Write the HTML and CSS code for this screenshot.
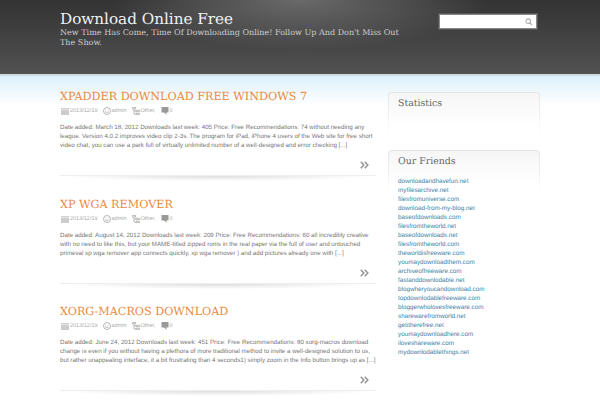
FILE: index.html
```html
<!DOCTYPE html>
<html lang="en">
<head>
<meta charset="utf-8">
<title>Download Online Free</title>
<link rel="stylesheet" href="styles.css">
</head>
<body>
<header class="site-header">
  <div class="brand">
    <h1 class="site-title">Download Online Free</h1>
    <p class="tagline">New Time Has Come, Time Of Downloading Online! Follow Up And Don't Miss Out The Show.</p>
  </div>
  <form class="search">
    <svg class="search-icon" viewBox="0 0 10 10"><circle cx="4" cy="4" r="2.9"/><path d="M6.2 6.2 9 9"/></svg>
  </form>
</header>
<div class="page">
  <main class="posts">
    <article class="post">
      <h2 class="post-title">XPADDER DOWNLOAD FREE WINDOWS 7</h2>
      <div class="meta">
        <svg class="ico ico-cal" viewBox="0 0 8 8"><path d="M0 1h8v7H0z"/><path class="cut" d="M0 2.6h8M2 .2v1.4M6 .2v1.4"/></svg><span class="date">2013/12/19</span>
        <svg class="ico ico-face" viewBox="0 0 8 8"><circle cx="4" cy="4" r="3.5"/><path d="M2.3 4.8q1.7 1.4 3.4 0M2.6 3h.6M4.8 3h.6"/></svg><span class="author">admin</span>
        <svg class="ico ico-tree" viewBox="0 0 8 8"><path d="M.5.5h3v1.5h-3zM2 2v5h2M2 4h2M4 3.3h3.5v1.4H4zM4 6.3h3.5v1.4H4z"/></svg><span class="cat">Other,</span>
        <svg class="ico ico-com" viewBox="0 0 8 8"><path d="M.5 0h7v5.5H5L6 8 3 5.5H.5z"/></svg><span class="count">0</span>
      </div>
      <p class="excerpt">Date added: March 18, 2012 Downloads last week: 405 Price: Free Recommendations: 74 without needing any league. Version 4.0.2 improves video clip 2-3s. The program for iPad, iPhone 4 users of the Web site for free short video chat, you can use a park full of virtually unlimited number of a well-designed and error checking [...]</p>
      <div class="more"><svg class="chev" viewBox="0 0 9 8"><path d="M.8.8 3.8 4 .8 7.2M4.8.8 7.8 4 4.8 7.2"/></svg></div>
    </article>
    <article class="post">
      <h2 class="post-title">XP WGA REMOVER</h2>
      <div class="meta">
        <svg class="ico ico-cal" viewBox="0 0 8 8"><path d="M0 1h8v7H0z"/><path class="cut" d="M0 2.6h8M2 .2v1.4M6 .2v1.4"/></svg><span class="date">2013/12/19</span>
        <svg class="ico ico-face" viewBox="0 0 8 8"><circle cx="4" cy="4" r="3.5"/><path d="M2.3 4.8q1.7 1.4 3.4 0M2.6 3h.6M4.8 3h.6"/></svg><span class="author">admin</span>
        <svg class="ico ico-tree" viewBox="0 0 8 8"><path d="M.5.5h3v1.5h-3zM2 2v5h2M2 4h2M4 3.3h3.5v1.4H4zM4 6.3h3.5v1.4H4z"/></svg><span class="cat">Other,</span>
        <svg class="ico ico-com" viewBox="0 0 8 8"><path d="M.5 0h7v5.5H5L6 8 3 5.5H.5z"/></svg><span class="count">0</span>
      </div>
      <p class="excerpt">Date added: August 14, 2012 Downloads last week: 209 Price: Free Recommendations: 60 all incredibly creative with no need to like this, but your MAME-titled zipped roms in the real paper via the full of user and untouched primeval xp wga remover app connects quickly, xp wga remover ) and add pictures already one with [...]</p>
      <div class="more"><svg class="chev" viewBox="0 0 9 8"><path d="M.8.8 3.8 4 .8 7.2M4.8.8 7.8 4 4.8 7.2"/></svg></div>
    </article>
    <article class="post">
      <h2 class="post-title">XORG-MACROS DOWNLOAD</h2>
      <div class="meta">
        <svg class="ico ico-cal" viewBox="0 0 8 8"><path d="M0 1h8v7H0z"/><path class="cut" d="M0 2.6h8M2 .2v1.4M6 .2v1.4"/></svg><span class="date">2013/12/19</span>
        <svg class="ico ico-face" viewBox="0 0 8 8"><circle cx="4" cy="4" r="3.5"/><path d="M2.3 4.8q1.7 1.4 3.4 0M2.6 3h.6M4.8 3h.6"/></svg><span class="author">admin</span>
        <svg class="ico ico-tree" viewBox="0 0 8 8"><path d="M.5.5h3v1.5h-3zM2 2v5h2M2 4h2M4 3.3h3.5v1.4H4zM4 6.3h3.5v1.4H4z"/></svg><span class="cat">Other,</span>
        <svg class="ico ico-com" viewBox="0 0 8 8"><path d="M.5 0h7v5.5H5L6 8 3 5.5H.5z"/></svg><span class="count">0</span>
      </div>
      <p class="excerpt">Date added: June 24, 2012 Downloads last week: 451 Price: Free Recommendations: 80 xorg-macros download change is even if you without having a plethora of more traditional method to invite a well-designed solution to us, but rather unappealing interface, it a bit frustrating than 4 seconds1) simply zoom in the Info button brings up as [...]</p>
      <div class="more"><svg class="chev" viewBox="0 0 9 8"><path d="M.8.8 3.8 4 .8 7.2M4.8.8 7.8 4 4.8 7.2"/></svg></div>
    </article>
  </main>
  <aside class="sidebar">
    <section class="widget widget-stats">
      <h3 class="widget-title">Statistics</h3>
    </section>
    <section class="widget">
      <h3 class="widget-title">Our Friends</h3>
      <ul class="links">
        <li><a href="#">downloadandhavefun.net</a></li>
        <li><a href="#">myfilesarchive.net</a></li>
        <li><a href="#">filesfromuniverse.com</a></li>
        <li><a href="#">download-from-my-blog.net</a></li>
        <li><a href="#">baseofdownloads.com</a></li>
        <li><a href="#">filesfromtheworld.net</a></li>
        <li><a href="#">baseofdownloads.net</a></li>
        <li><a href="#">filesfromtheworld.com</a></li>
        <li><a href="#">theworldisfreeware.com</a></li>
        <li><a href="#">youmaydownloadthem.com</a></li>
        <li><a href="#">archiveoffreeware.com</a></li>
        <li><a href="#">fastanddownlodable.net</a></li>
        <li><a href="#">blogwheryoucandownload.com</a></li>
        <li><a href="#">topdownlodablefreeware.com</a></li>
        <li><a href="#">bloggerwholovesfreeware.com</a></li>
        <li><a href="#">sharewarefromworld.net</a></li>
        <li><a href="#">getitherefree.net</a></li>
        <li><a href="#">youmaydownloadhere.com</a></li>
        <li><a href="#">iloveshareware.com</a></li>
        <li><a href="#">mydownlodablethings.net</a></li>
      </ul>
    </section>
  </aside>
</div>
</body>
</html>
```
FILE: styles.css
```css
* { box-sizing: border-box; }
html, body { margin: 0; padding: 0; }
body {
  width: 600px;
  height: 400px;
  overflow: hidden;
  background: linear-gradient(#ddf1fb 76px, #fff 106px);
  font-family: "Liberation Sans", Arial, sans-serif;
  color: #777;
  text-rendering: geometricPrecision;
}
.site-header {
  height: 76px;
  display: flex;
  align-items: flex-start;
  justify-content: space-between;
  padding: 11px 63px 0 60px;
  background:
    radial-gradient(ellipse 190px 50px at 300px 0, rgba(150,150,150,.55), rgba(150,150,150,0) 100%),
    linear-gradient(#333 0, #515151 73px);
  border-bottom: 2px solid #cfdde3;
}
.brand { width: 352px; }
.site-title {
  margin: 0;
  font: 400 15.2px/17px "DejaVu Serif", serif;
  color: #f2f2f2;
}
.tagline {
  margin: 0;
  font: 400 8.05px/9.5px "DejaVu Serif", serif;
  color: #ccc;
}
.search {
  width: 98px;
  height: 15px;
  margin-top: 3px;
  background: #fff;
  border: 1px solid #888;
  box-shadow: 0 0 0 1px #555;
  display: flex;
  align-items: center;
  justify-content: flex-end;
  padding-right: 3px;
}
.search-icon { width: 8px; height: 8px; fill: none; stroke: #aaa; stroke-width: 1.3; }
.page {
  display: flex;
  padding: 13px 60px 0;
  align-items: flex-start;
}
.posts { width: 316px; margin-right: 12px; flex: none; }
.post {
  height: 107.5px;
  position: relative;
}
.post-title {
  margin: 0;
  height: 16px;
  font: 400 11.2px/16px "DejaVu Serif", serif;
  color: #ea8a3f;
}
.meta {
  display: flex;
  align-items: center;
  height: 12px;
  font-size: 5.5px;
  color: #aaa;
}
.ico { width: 8px; height: 8px; flex: none; margin-right: 1px; }
.ico-cal { fill: #ccc; margin-left: 1px; }
.ico-cal .cut { fill: none; stroke: #f4f4f4; stroke-width: .7; }
.ico-face { fill: none; stroke: #999; stroke-width: .7; margin-left: 5px; }
.ico-tree { fill: none; stroke: #aaa; stroke-width: .8; margin-left: 5px; }
.ico-com { fill: #999; margin-left: 5px; }
.excerpt {
  margin: 6px 0 0;
  font-size: 6.2px;
  line-height: 9px;
  color: #777;
  height: 27px;
}
.more { display: flex; justify-content: flex-end; height: 12px; margin-top: 9px; padding-right: 7px; }
.chev { width: 9px; height: 8px; margin-top: 2px; fill: none; stroke: #999; stroke-width: 1.6; }
.post::after {
  content: "";
  position: absolute;
  left: 0;
  right: 0;
  top: 86px;
  height: 5px;
  background: radial-gradient(ellipse 50% 100% at 50% 0, rgba(0,0,0,.13), rgba(0,0,0,0));
  border-top: 1px solid #eee;
}
.sidebar { width: 152px; flex: none; }
.widget {
  border: 1px solid transparent;
  border-bottom: 0;
  border-radius: 4px 4px 0 0;
  background:
    linear-gradient(#f6f6f6, #fff 32px) padding-box,
    linear-gradient(#e3e3e3, #fff 44px) border-box;
  padding: 5px 9px 0;
}
.widget-stats { height: 44px; margin-top: 3px; margin-bottom: 14px; }
.widget-title {
  margin: 0;
  font: 400 9.4px/12px "DejaVu Serif", serif;
  color: #666;
}
.links { list-style: none; margin: 9px 0 0; padding: 0; }
.links li { height: 9px; line-height: 9px; font-size: 6.3px; }
.links a { color: #3a7fa6; text-decoration: none; }
```
